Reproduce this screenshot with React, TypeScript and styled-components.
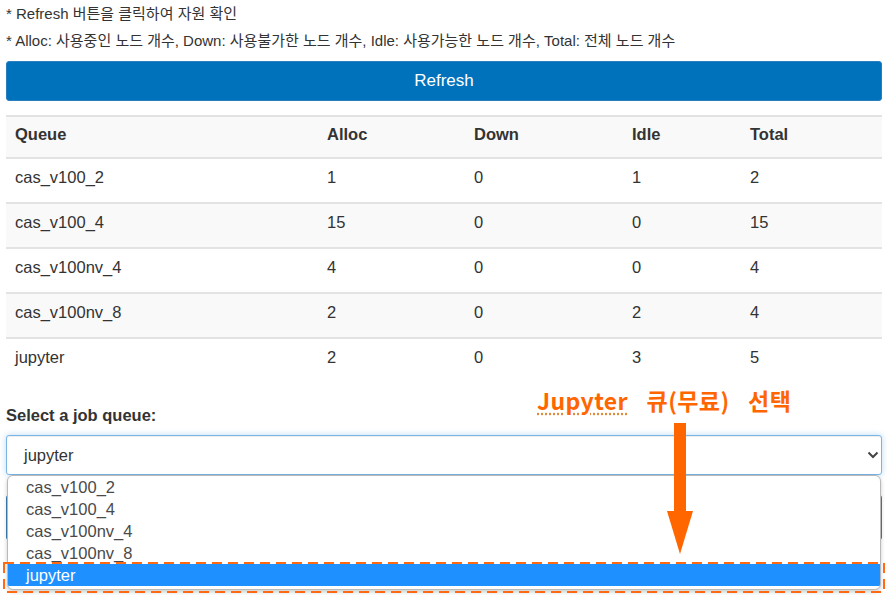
import React from 'react';
import styled, { createGlobalStyle } from 'styled-components';

const Global = createGlobalStyle`
  html, body { margin: 0; padding: 0; background: #fff; }
  body { font-family: "Liberation Sans", "Noto Sans CJK KR", Arial, sans-serif; color: #333; }
  * { box-sizing: border-box; }
`;

const Page = styled.div`
  position: relative;
  width: 887px;
  height: 595px;
  overflow: hidden;
  padding: 0 5px 0 6px;
`;

const Note = styled.p`
  margin: 0;
  font-size: 15px;
  line-height: 27px;
  color: #333;
`;

const RefreshButton = styled.button`
  display: block;
  width: 100%;
  height: 40px;
  margin-top: 7px;
  background: #0072bc;
  border: 1px solid #2a7fc0;
  border-radius: 3px;
  color: #fff;
  font-family: "Liberation Sans", Arial, sans-serif;
  font-size: 17px;
  cursor: pointer;
`;

const Table = styled.table`
  width: 100%;
  margin-top: 14px;
  border-collapse: separate;
  border-spacing: 0;
  table-layout: fixed;
  font-size: 16.5px;
`;

const HeadCell = styled.th`
  text-align: left;
  font-weight: bold;
  background: #f9f9f9;
  border-top: 2px solid #e3e3e3;
  padding: 7px 9px 12px;
  line-height: 21px;
`;

const Row = styled.tr<{ $striped: boolean }>`
  background: ${(p) => (p.$striped ? '#f9f9f9' : '#fff')};
`;

const Cell = styled.td`
  border-top: 2px solid #e3e3e3;
  padding: 8px 9px 14px;
  line-height: 21px;
`;

const Label = styled.label`
  display: block;
  margin-top: 22px;
  font-weight: bold;
  font-size: 16.5px;
  line-height: 22px;
`;

const SelectWrap = styled.div`
  position: relative;
  margin-top: 9px;
`;

const SelectBox = styled.div`
  position: relative;
  height: 40px;
  border: 1px solid #7ab5e6;
  border-radius: 3px;
  box-shadow: inset 0 1px 1px rgba(0, 0, 0, 0.075), 0 0 6px rgba(102, 175, 233, 0.45);
  padding-left: 17px;
  font-size: 16.5px;
  line-height: 38px;
  color: #333;
  background: #fff;
`;

const Chevron = styled.svg`
  position: absolute;
  right: 2px;
  top: 15px;
`;

const SubmitButton = styled.div`
  margin-top: 20px;
  height: 45px;
  background: #3f7fb5;
  border-radius: 3px;
`;

const OptionList = styled.ul`
  position: absolute;
  top: 40px;
  left: 1px;
  right: 1px;
  height: 115px;
  margin: 0;
  padding: 0;
  list-style: none;
  background: #fff;
  border: 1px solid #b9b9b9;
  border-radius: 6px;
  box-shadow: 0 2px 4px rgba(0, 0, 0, 0.2);
  overflow: hidden;
`;

const Option = styled.li<{ $selected: boolean }>`
  height: 22px;
  line-height: 22px;
  padding-left: 18px;
  font-size: 16.5px;
  color: ${(p) => (p.$selected ? '#fff' : '#4a4a4a')};
  background: ${(p) => (p.$selected ? '#1e90ff' : 'transparent')};
`;

const DashedFrame = styled.svg`
  position: absolute;
  top: 127px;
  left: -3px;
  pointer-events: none;
`;

const Annotation = styled.div`
  position: absolute;
  left: 537px;
  top: 385px;
  font-family: "Noto Sans CJK KR", "Liberation Sans", sans-serif;
  font-weight: bold;
  font-size: 23px;
  line-height: 30px;
  letter-spacing: 0.4px;
  color: #ff6600;
  word-spacing: 13px;
  white-space: nowrap;
`;

const Squiggle = styled.span`
  text-decoration: underline dotted #e08a3a;
  text-underline-offset: 3px;
`;

const Arrow = styled.svg`
  position: absolute;
  left: 667px;
  top: 423px;
`;

const queues = [
  { name: 'cas_v100_2', alloc: 1, down: 0, idle: 1, total: 2 },
  { name: 'cas_v100_4', alloc: 15, down: 0, idle: 0, total: 15 },
  { name: 'cas_v100nv_4', alloc: 4, down: 0, idle: 0, total: 4 },
  { name: 'cas_v100nv_8', alloc: 2, down: 0, idle: 2, total: 4 },
  { name: 'jupyter', alloc: 2, down: 0, idle: 3, total: 5 },
];

export default function App() {
  return (
    <>
      <Global />
      <Page>
        <Note>* Refresh 버튼을 클릭하여 자원 확인</Note>
        <Note>* Alloc: 사용중인 노드 개수, Down: 사용불가한 노드 개수, Idle: 사용가능한 노드 개수, Total: 전체 노드 개수</Note>
        <RefreshButton>Refresh</RefreshButton>
        <Table>
          <colgroup>
            <col style={{ width: 312 }} />
            <col style={{ width: 147 }} />
            <col style={{ width: 158 }} />
            <col style={{ width: 118 }} />
            <col />
          </colgroup>
          <thead>
            <tr>
              <HeadCell>Queue</HeadCell>
              <HeadCell>Alloc</HeadCell>
              <HeadCell>Down</HeadCell>
              <HeadCell>Idle</HeadCell>
              <HeadCell>Total</HeadCell>
            </tr>
          </thead>
          <tbody>
            {queues.map((q, i) => (
              <Row key={q.name} $striped={i % 2 === 1}>
                <Cell>{q.name}</Cell>
                <Cell>{q.alloc}</Cell>
                <Cell>{q.down}</Cell>
                <Cell>{q.idle}</Cell>
                <Cell>{q.total}</Cell>
              </Row>
            ))}
          </tbody>
        </Table>
        <Label>Select a job queue:</Label>
        <SelectWrap>
          <SelectBox>
            jupyter
            <Chevron width="12" height="8" viewBox="0 0 12 8">
              <path d="M1.5 1.5 L6 6 L10.5 1.5" fill="none" stroke="#444" strokeWidth="2" />
            </Chevron>
          </SelectBox>
          <SubmitButton />
          <OptionList>
            {queues.map((q) => (
              <Option key={q.name} $selected={q.name === 'jupyter'}>
                {q.name}
              </Option>
            ))}
          </OptionList>
          <DashedFrame width="882" height="31" viewBox="0 0 882 31">
            <rect x="1" y="1" width="880" height="29" fill="none" stroke="#ff6a13" strokeWidth="2" strokeDasharray="10 6" />
          </DashedFrame>
        </SelectWrap>
        <Annotation>
          <Squiggle>Jupyter</Squiggle> 큐(무료) 선택
        </Annotation>
        <Arrow width="26" height="131" viewBox="0 0 26 131">
          <rect x="7" y="0" width="12" height="90" fill="#ff6600" />
          <polygon points="0,88 26,88 13,131" fill="#ff6600" />
        </Arrow>
      </Page>
    </>
  );
}
